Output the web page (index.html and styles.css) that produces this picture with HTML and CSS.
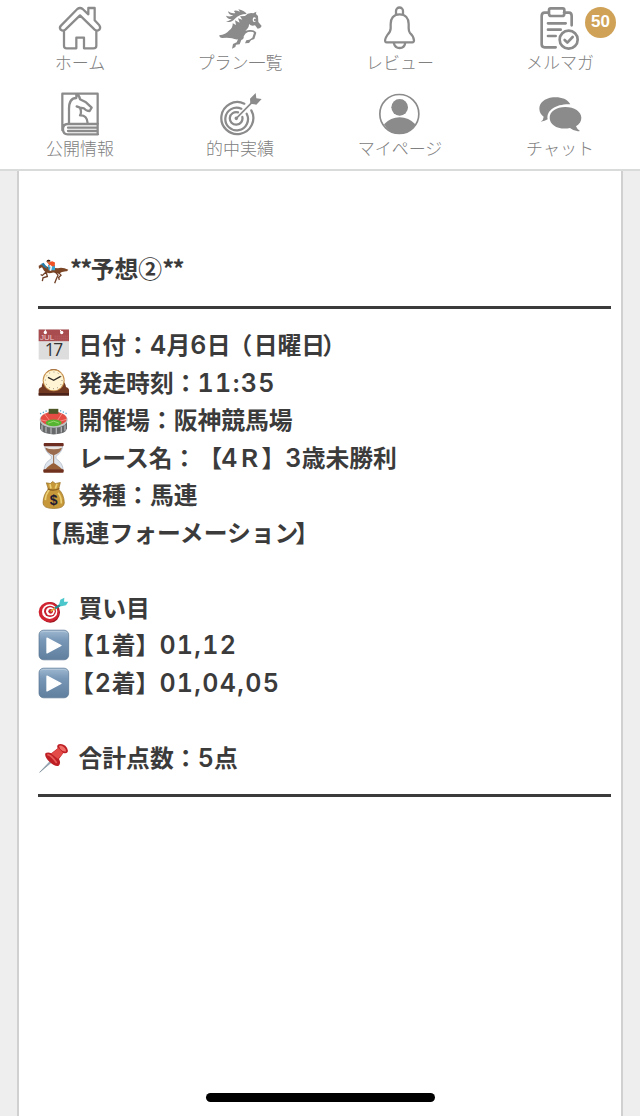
FILE: index.html
```html
<!DOCTYPE html>
<html lang="ja">
<head>
<meta charset="utf-8">
<meta name="viewport" content="width=device-width">
<title>予想</title>
<link rel="stylesheet" href="styles.css">
</head>
<body>
<nav class="nav">
  <a class="item">
    <svg class="icon line" viewBox="177 21 126 126"><path d="M183 77L232 27q8-6 16 0L265 43V24H284V61L298 76q5 7 0 13q-7 6-14 0L240 46L196 89q-7 6-14 0q-5-6 1-12ZM192 94V137q0 8 8 8H229V113H252V145H280q9 0 9-8V94"/></svg>
    <span>ホーム</span>
  </a>
  <a class="item">
    <svg class="icon solid" viewBox="657 21 126 126"><path d="M658 106Q657 113 666 114Q685 112 696 115Q705 119 714 118L710 127L699 132L696 146L706 141L708 134L719 133L724 120Q733 117 731 109Q736 99 744 96Q757 93 762 98L757 113L748 119L739 121L735 130L747 129L753 121L763 117L769 98Q763 88 748 90L736 92Q748 83 747 72Q754 80 765 76L773 86Q782 86 785 78L775 66L774 48L768 42L769 35L760 40Q744 37 735 48L720 49L727 59L714 55L719 68L705 61L708 75L698 70Q699 82 688 91Q677 104 658 106Z"/><path d="M678 66Q696 68 704 57Q718 42 740 42Q733 31 715 28L720 35Q703 28 702 34L706 39Q696 42 684 34Q686 46 700 46Q691 52 678 47Q682 58 695 57Q689 62 678 66Z"/><ellipse cx="763" cy="59" rx="5" ry="7" fill="#fff"/><circle cx="765" cy="60" r="3.500"/></svg>
    <span>プラン一覧</span>
  </a>
  <a class="item">
    <svg class="icon line" viewBox="177 21 126 126"><path d="M228 44V33a10 10 0 0 1 21 0V44M239 43C219 43 212 57 212 72V85Q212 96 202 105Q193 119 196 125Q197 127 201 127H277Q282 127 282 121Q281 109 270 99Q266 94 266 85V72C266 54 256 43 239 43ZM221 128Q225 144 239 144T256 128"/></svg>
    <span>レビュー</span>
  </a>
  <a class="item">
    <svg class="icon line thick" viewBox="660 21 126 126"><path d="M690 38H677Q668 38 668 48V133Q668 142 677 142H710M735 38H750Q758 38 758 48V76M695 25H731q5 0 5 5V41q0 7-7 7H697q-7 0-7-7V31q0-6 5-6ZM687 70H740M687 89H725M687 108H710"/><circle cx="749" cy="119" r="27"/><path d="M737 120L745 128L761 111"/></svg>
    <b class="badge">50</b>
    <span>メルマガ</span>
  </a>
  <a class="item">
    <svg class="icon line" viewBox="177 277 126 126"><path d="M187 389V279H293V401M294 370H203Q189 370 189 385Q189 401 203 401H294M204 381H290M204 391H290M207 368V325Q207 292 229 292V281Q239 284 240 296L258 305L275 321L269 331Q258 331 252 323L240 321L230 317M240 322Q246 335 240 344Q262 343 263 368"/></svg>
    <span>公開情報</span>
  </a>
  <a class="item">
    <svg class="icon line" viewBox="657 277 126 126"><path d="M754 329A48 48 0 1 1 733 309M740 339A34 34 0 1 1 724 324M727 349A19 19 0 1 1 714 335"/><circle cx="709" cy="353" r="2"/><path d="M709 353L756 305" stroke-width="5"/><path class="fill" d="M751 309L750 294L767 277L769 293L785 295L769 312Z"/></svg>
    <span>的中実績</span>
  </a>
  <a class="item">
    <svg class="icon solid" viewBox="177 277 126 126"><circle cx="238" cy="340" r="58.500" fill="none" stroke="#8b8b8b" stroke-width="5"/><circle cx="239" cy="320" r="25"/><path d="M192 371Q212 350 239 350T286 371Q269 400 238 400T192 371Z"/></svg>
    <span>マイページ</span>
  </a>
  <a class="item">
    <svg class="icon solid" viewBox="657 277 126 126"><path d="M751 311C741 293 720 288 699 290C673 293 658 307 658 324C658 335 664 343 671 348Q671 357 662 363Q675 362 683 356C678 328 710 309 751 311Z"/><path d="M768 377Q770 384 780 391Q764 394 750 382C717 389 689 374 689 351C689 332 710 319 736 319C763 319 784 333 784 351C784 361 779 370 768 377Z"/></svg>
    <span>チャット</span>
  </a>
</nav>
<main class="panel">
  <h2 class="line-row title"><svg class="emoji" viewBox="114 40.500 93 93"><path d="M124 75L116 79L117 88L126 83L132 94Q140 105 160 99L176 103Q186 94 201 95L205 91Q188 82 174 86L153 85Q137 82 131 73Z" fill="#7b4626"/><path d="M139 97L127 108L122 105M139 99L142 111L129 115L127 125M174 97L183 107L176 114L178 121M166 98L174 107L168 121L164 131" fill="none" stroke="#704127" stroke-width="4"/><path d="M119 75L131 70L139 81L143 88L132 83L125 75Z" fill="#247ba8"/><path d="M144 76H165V92H146Z" fill="#35a5d5"/><path d="M142 69L157 65L165 69L164 80L151 81Z" fill="#f05225"/><path d="M149 78L154 82L151 94" fill="none" stroke="#eee" stroke-width="5"/><circle cx="145" cy="66" r="5" fill="#cc7849"/><path d="M139 66a7 7 0 0 1 13-1Z" fill="#281c18"/></svg><span><i class="star">**</i>予想②<i class="star">**</i></span></h2>
  <hr class="rule">
  <div class="body">
    <p class="line-row"><svg class="emoji" viewBox="114 268.500 93 93"><path d="M116 270H207V360H116Z" fill="#dedddd"/><path d="M116 270H207V305H116Z" fill="#a94c4f"/><circle cx="136" cy="279" r="5" fill="#fff"/><circle cx="185" cy="279" r="5" fill="#fff"/><path d="M136 270V278M180 271L185 278" stroke="#fff" stroke-width="3"/><text class="month" x="120" y="301">JUL</text><path d="M164 290H204M164 296H204M164 302H204" stroke="#c87577" stroke-width="2" stroke-dasharray="3 3"/><text class="day" x="160" y="350">17</text></svg><span class="gap">日付：<i class="n1">4</i>月<i class="n1">6</i>日<i class="open">（</i>日曜日<i class="close">）</i></span></p>
    <p class="line-row"><svg class="emoji" viewBox="114 381 93 93"><path d="M116 466V449Q117 443 125 441Q126 428 134 424Q132 388 161 387Q190 389 188 424Q196 428 198 441Q206 443 207 449V466Z" fill="#713922"/><path d="M116 459H207V467H116Z" fill="#4b2217"/><circle cx="161" cy="421" r="33" fill="#c68f4b"/><circle cx="161" cy="421" r="30" fill="#fff5d5"/><circle cx="161" cy="421" r="25" fill="none" stroke="#685a4a" stroke-width="3" stroke-dasharray="2 11"/><path d="M144 412L161 421L182 409" stroke="#302a26" stroke-width="4" fill="none"/></svg><span class="gap">発走時刻：<i class="time">11:35</i></span></p>
    <p class="line-row"><svg class="emoji" viewBox="114 13.500 93 93"><path d="M120 58V88Q125 103 161 105Q199 103 201 87V58Z" fill="#66686a"/><path d="M126 77V94M138 82V99M153 84V103M169 84V103M184 82V99M195 77V94" stroke="#b2b3b4" stroke-width="4"/><ellipse cx="161" cy="61" rx="42" ry="24" fill="#bfc4c3"/><ellipse cx="161" cy="58" rx="39" ry="21" fill="#e54c43"/><path d="M133 42L148 62M186 42L173 62M122 61L142 65M201 59L180 65" stroke="#ffaaa0" stroke-width="2"/><ellipse cx="161" cy="70" rx="24" ry="10" fill="#55b532"/><path d="M144 71L161 65L177 71" stroke="#b5ed8b" stroke-width="2" fill="none"/><path d="M146 28H175V43H146Z" fill="#4d5626"/><path d="M120 43L143 33M180 33L202 43" stroke="#59acd0" stroke-width="4" stroke-dasharray="4 5"/></svg><span class="gap">開催場：阪神競馬場</span></p>
    <p class="line-row"><svg class="emoji" viewBox="114 126 93 93"><path d="M134 134H188Q190 153 168 169V176Q190 190 189 211H132Q132 189 154 176V169Q133 153 134 134Z" fill="#dfe5ed" stroke="#a9b3c3" stroke-width="2"/><path d="M136 143Q161 150 186 143Q182 159 161 166Q139 159 136 143Z" fill="#9b6d50"/><path d="M138 138Q161 148 184 138L184 143Q161 152 138 143Z" fill="#eee4dc"/><path d="M161 164V191" stroke="#926548" stroke-width="3"/><path d="M135 209Q151 192 161 189Q171 194 188 209Z" fill="#976039"/><rect x="131" y="129" width="60" height="10" rx="3" fill="#6d2d20"/><rect x="130" y="208" width="61" height="10" rx="3" fill="#70301e"/></svg><span class="gap">レース名：<i class="race">【</i><i class="n1">4</i>Ｒ】<i class="n1">3</i>歳未勝利</span></p>
    <p class="line-row"><svg class="emoji" viewBox="114 238.500 93 93"><path d="M145 269L139 250L151 252L158 246L166 252L181 249L176 269Q192 284 193 310Q193 327 161 327T129 310Q130 284 145 269Z" fill="#c6983a" stroke="#966c20" stroke-width="2"/><path d="M149 270Q137 283 136 302M174 280Q184 290 184 312M150 254L153 267M171 253L166 267" stroke="#ecd177" stroke-width="5" fill="none"/><path d="M143 268Q160 276 178 267" stroke="#885d1d" stroke-width="4" fill="none"/><text class="dollar" x="161" y="316">$</text></svg><span class="gap">券種：馬連</span></p>
    <p class="line-row"><span>【馬連フォーメーション<i class="close">】</i></span></p>
    <p class="line-row"></p>
    <p class="line-row"><svg class="emoji" viewBox="114 36 93 93"><ellipse cx="151" cy="97" rx="29" ry="31" fill="#9a1420"/><ellipse cx="147" cy="96" rx="31" ry="30" fill="#d12431"/><ellipse cx="149" cy="95" rx="23" ry="22" fill="#fff"/><ellipse cx="150" cy="94" rx="18" ry="17" fill="#c9202f"/><ellipse cx="151" cy="94" rx="13" ry="12" fill="#fff"/><circle cx="152" cy="94" r="7" fill="#c7202c"/><path d="M152 94L168 83" stroke="#e3ac34" stroke-width="5"/><path d="M165 85L187 71" stroke="#218b91" stroke-width="7"/><path d="M177 74L181 59L193 53L192 65L205 65L198 76L184 79Z" fill="#4cc7cc"/></svg><span class="gap">買い目</span></p>
    <p class="line-row"><svg class="emoji" viewBox="114 148.500 93 93"><use href="#play"/></svg><span>【<i class="bet">1</i>着】<i class="nums">01,12</i></span></p>
    <p class="line-row"><svg class="emoji" viewBox="114 148.500 93 93"><defs><linearGradient id="blue" x2="0" y2="1"><stop stop-color="#9eb8d0"/><stop offset=".35" stop-color="#7897b7"/><stop offset="1" stop-color="#607f9f"/></linearGradient></defs><g id="play"><rect x="117" y="152" width="89" height="89" rx="14" fill="url(#blue)" stroke="#55718e" stroke-width="2"/><path d="M121 160Q122 156 132 156H191Q201 156 202 161" stroke="#bed0df" stroke-width="2" fill="none"/><path d="M141 176L183 198L141 220Z" fill="#fff" stroke="#fff" stroke-width="4" stroke-linejoin="round"/></g></svg><span>【<i class="bet">2</i>着】<i class="nums">01,04,05</i></span></p>
    <p class="line-row"></p>
    <p class="line-row"><svg class="emoji" viewBox="114 486 93 93"><path d="M119 577L156 538L160 542Z" fill="#9aabb9" stroke="#7c8d99" stroke-width="2"/><path d="M137 519Q145 515 154 520L173 505Q169 497 176 493Q185 489 196 497Q206 507 203 516Q199 522 190 519L177 537Q184 550 176 557Q166 561 149 546Q131 528 137 519Z" fill="#bd1f25"/><path d="M154 521L174 537L190 519L175 504Z" fill="#e34b48"/><path d="M177 498Q181 494 190 500Q200 508 197 515Q187 515 180 506Z" fill="#f07069"/><path d="M142 524Q154 525 170 549" stroke="#e85a56" stroke-width="5" fill="none"/></svg><span class="gap">合計点数：<i class="n1">5</i>点</span></p>
  </div>
  <hr class="rule">
</main>
<div class="home-bar"></div>
</body>
</html>
```

FILE: styles.css
```css
* { box-sizing: border-box; }
body {
  margin: 0;
  width: 640px;
  height: 1116px;
  display: flex;
  flex-direction: column;
  position: relative;
  overflow: hidden;
  background: #eee;
  color: #3b3b3b;
  font-family: "Noto Sans CJK JP", sans-serif;
  text-spacing-trim: space-all;
}
.nav {
  height: 171px;
  flex: none;
  display: grid;
  grid-template-columns: repeat(4, 160px);
  grid-template-rows: 85.500px 76px;
  padding-top: 7px;
  background: #fff;
  border-bottom: 2px solid #d9dbda;
}
.item {
  position: relative;
  display: flex;
  flex-direction: column;
  align-items: center;
  color: #808080;
  font-size: 17px;
  font-weight: 300;
  line-height: 26px;
  white-space: nowrap;
}
.icon { display: block; width: 42px; height: 42px; overflow: visible; }
.line { fill: none; stroke: #8b8b8b; stroke-width: 6.800px; stroke-linejoin: round; stroke-linecap: round; }
.thick { stroke-width: 8px; }
.solid { fill: #8b8b8b; }
.fill { fill: #8b8b8b; stroke: none; }
.badge {
  position: absolute;
  left: 105px;
  top: 0;
  width: 31px;
  height: 31px;
  border-radius: 50%;
  background: #cfa257;
  color: #fff;
  font: 700 17px/30px "Liberation Sans", Arial, sans-serif;
  text-align: center;
}
.panel {
  flex: 1;
  margin: 0 17px;
  padding: 79px 10px 0 19px;
  background: #fff;
  border: solid #d0d0d0;
  border-width: 0 2px;
}
.line-row {
  display: flex;
  align-items: center;
  height: 37.500px;
  margin: 0;
  font-size: 23.800px;
  font-weight: 700;
  line-height: 35.500px;
  white-space: nowrap;
}
.line-row > span { padding-bottom: 1.500px; }
.emoji { width: 31px; height: 31px; flex: none; margin-right: 1px; overflow: visible; }
.gap { margin-left: 8.500px; }
.rule { height: 3px; margin: 0; border: 0; background: #3b3b3b; }
.title { margin-bottom: 18px; }
.star { letter-spacing: -1.700px; }
.body { margin: 17.500px 0; }
i { font-style: normal; }
.open { margin-left: -2px; margin-right: 1.500px; }
.close { margin-left: -3px; }
.race { margin: 0 -1px 0 2px; }
.n1, .time, .bet, .nums {
  font-family: Inter, "Noto Sans CJK JP", sans-serif;
  font-weight: 600;
  font-size: 25px;
  line-height: 1;
  font-variant-numeric: tabular-nums;
}
.n1, .bet { display: inline-block; width: 16.500px; text-align: center; }
.bet { width: 18px; }
.time, .nums { letter-spacing: 1.400px; }
.nums { letter-spacing: 1.300px; }
.month { font: 24px/1 "Liberation Sans", sans-serif; fill: #efcccc; }
.day { font: 52px/1 "Open Sans", sans-serif; fill: #333; text-anchor: middle; letter-spacing: -4px; }
.dollar { font: 700 42px/1 "Liberation Sans", sans-serif; fill: #1e1b32; text-anchor: middle; }
.home-bar {
  position: absolute;
  left: 206px;
  top: 1093px;
  width: 229px;
  height: 9px;
  border-radius: 5px;
  background: #000;
}
```
